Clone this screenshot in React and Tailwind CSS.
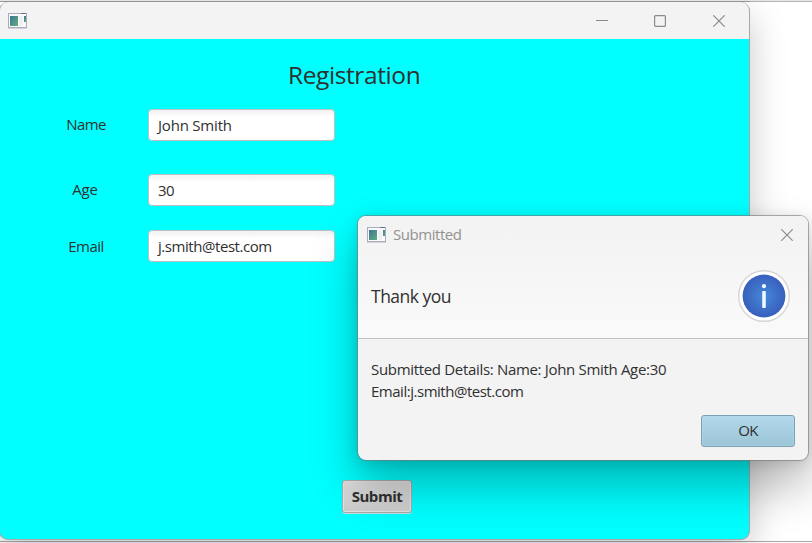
import React from "react";

function AppIcon() {
  return (
    <svg className="block shrink-0" width="19" height="16" viewBox="0 0 19 16">
      <defs>
        <linearGradient id="pane" x1="0" y1="0" x2="1" y2="1">
          <stop offset="0" stopColor="#3f739c" />
          <stop offset="1" stopColor="#5cb079" />
        </linearGradient>
      </defs>
      <rect x="0" y="0" width="19" height="15" fill="#a9adba" />
      <rect x="0" y="15" width="19" height="1" fill="#d5d6db" />
      <rect x="1" y="1" width="17" height="13" fill="#fafafc" />
      <rect x="13" y="0" width="5" height="1" fill="#667089" />
      <rect x="2" y="3" width="8" height="10" fill="url(#pane)" />
      <rect x="11" y="3" width="4" height="10" fill="#efeff1" />
      <rect x="16" y="3" width="2" height="6" fill="url(#pane)" />
    </svg>
  );
}

function CloseIcon() {
  return (
    <svg className="block" width="12" height="12" viewBox="0 0 12 12" stroke="#8a8a8a" strokeWidth="1.2" fill="none">
      <path d="M0.3 0.3 11.7 11.7M11.7 0.3 0.3 11.7" />
    </svg>
  );
}

function Field({ label, value, className, labelClass, valueClass }) {
  return (
    <div className={"flex h-8 items-center " + className}>
      <div className="w-[148px] shrink-0 pb-[2px] pl-[24px] text-center">
        <span className={labelClass}>{label}</span>
      </div>
      <div className="flex h-8 w-[187px] items-center rounded-[4px] border border-[#bfbfbf] bg-white bg-linear-to-b from-[#f1f1f1] to-white to-25% pt-px pl-[9px]">
        <span className={valueClass}>{value}</span>
      </div>
    </div>
  );
}

function MainWindow() {
  return (
    <div className="absolute -left-px top-[2px] flex h-[538px] w-[751px] flex-col overflow-hidden rounded-[9px] border border-t-0 border-[#a8a8a8] bg-[#a8a8a8] shadow-[0_14px_36px_rgba(0,0,0,0.22)]">
      <div className="flex h-[37px] shrink-0 items-center bg-[#f3f3f3] pl-2 pr-[24px]">
        <AppIcon />
        <div className="ml-auto flex items-center">
          <svg className="mr-[46px]" width="12" height="12" viewBox="0 0 12 12">
            <rect x="0" y="5" width="12" height="1" fill="#8a8a8a" />
          </svg>
          <svg className="mr-[47px]" width="12" height="12" viewBox="0 0 12 12">
            <rect x="0.6" y="0.6" width="10.8" height="10.8" rx="1" fill="none" stroke="#8a8a8a" strokeWidth="1.2" />
          </svg>
          <CloseIcon />
        </div>
      </div>
      <div className="flex grow flex-col bg-[#00ffff]">
        <h1 className="mt-[19px] pl-[288px] text-[24.5px] leading-[34px] tracking-[-0.4px]">Registration</h1>
        <Field className="mt-[17px]" label="Name" value="John Smith" labelClass="tracking-[-0.65px]" valueClass="tracking-[-0.2px]" />
        <Field className="mt-[33px]" label="Age" value="30" labelClass="-ml-[2px] tracking-[-0.2px]" valueClass="tracking-[-0.5px]" />
        <Field className="mt-[24px]" label="Email" value="j.smith@test.com" labelClass="relative top-px tracking-[-0.5px]" valueClass="tracking-[-0.44px]" />
        <div className="mt-[218px] pl-[342px]">
          <button className="block h-[33px] w-[70px] rounded-[3px] border border-[#aaa] bg-linear-to-b from-[#dedede] to-[#cdcdcd] text-[15px] font-bold tracking-[-0.45px] shadow-[inset_0_0_0_1px_#e4e4e4,0_1px_0_#c5dede]">
            Submit
          </button>
        </div>
      </div>
    </div>
  );
}

function InfoIcon() {
  return (
    <svg className="block" width="52" height="52" viewBox="0 0 52 52">
      <defs>
        <radialGradient id="info">
          <stop offset="0" stopColor="#4688d8" />
          <stop offset="1" stopColor="#385fbc" />
        </radialGradient>
      </defs>
      <circle cx="26" cy="26" r="25.3" fill="#fff" stroke="#d5d5d5" strokeWidth="1.4" />
      <circle cx="26" cy="26" r="21.4" fill="url(#info)" />
      <circle cx="26" cy="16.2" r="2.1" fill="#eef6ff" />
      <rect x="24.2" y="21" width="3.6" height="17" rx="0.8" fill="#eef6ff" />
    </svg>
  );
}

function Dialog() {
  return (
    <div className="absolute left-[357px] top-[215px] flex h-[246px] w-[452px] flex-col overflow-hidden rounded-[9px] border border-[#777]/60 bg-[#f3f3f3] bg-clip-padding shadow-[0_26px_46px_rgba(0,0,0,0.28),0_2px_14px_rgba(0,0,0,0.12)]">
      <div className="h-[123px] shrink-0 border-b border-[#c2c2c2] bg-linear-to-b from-[#f2f2f2] to-[#fafafa]">
        <div className="flex h-[37px] items-center pl-[9px] pr-[15px]">
          <AppIcon />
          <span className="ml-[7px] text-[15px] tracking-[-0.45px] text-[#929292]">Submitted</span>
          <div className="ml-auto">
            <CloseIcon />
          </div>
        </div>
        <div className="mt-[17px] flex h-[52px] items-center justify-between pl-[13px] pr-[18px]">
          <span className="text-[17.5px] tracking-[-0.5px]">Thank you</span>
          <InfoIcon />
        </div>
      </div>
      <p className="mt-[19px] pl-[13px] leading-[22px]">
        <span className="block tracking-[-0.32px]">Submitted Details: Name: John Smith Age:30</span>
        <span className="block tracking-[-0.48px]">Email:j.smith@test.com</span>
      </p>
      <div className="mt-[13px] flex justify-end pr-[13px]">
        <button className="h-8 w-[94px] rounded-[3px] border border-[#7ba0b3] bg-linear-to-b from-[#b1d9eb] to-[#9cc4d7] pb-[2px] tracking-[-0.6px] shadow-[inset_0_0_0_1px_#b6dbeb80]">
          OK
        </button>
      </div>
    </div>
  );
}

export default function App() {
  return (
    <div className="relative h-[543px] w-[812px] overflow-hidden border-t border-[#e5e5e5] bg-white font-['Open_Sans','Noto_Sans',sans-serif] text-[15px] text-[#303030]">
      <div className="h-[541px] border-y border-t-[#b5b5b5] border-b-[#aaa]" />
      <div className="absolute -top-px left-0 h-[543px] w-[812px]">
        <div className="absolute left-0 top-px h-px w-[750px] bg-[#999]" />
        <MainWindow />
        <Dialog />
      </div>
    </div>
  );
}
